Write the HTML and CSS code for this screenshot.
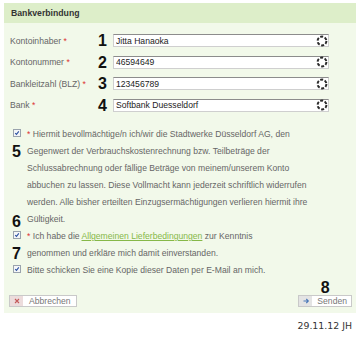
FILE: index.html
```html
<!DOCTYPE html>
<html lang="de">
<head>
    <meta charset="UTF-8">
    <meta name="viewport" content="width=device-width, initial-scale=1.0">
    <title>Bankverbindung</title>
    <link rel="stylesheet" href="styles.css">
</head>
<body>

<div class="panel">
    <div class="panel-head">Bankverbindung</div>

    <div class="panel-body">
        <form class="fields">
            <label class="field-label" for="inhaber">Kontoinhaber <span class="req">*</span></label>
            <span class="marker">1</span>
            <div class="input-wrap">
                <input type="text" id="inhaber" value="Jitta Hanaoka">
                <svg class="spin" viewBox="0 0 12 12"><circle cx="6" cy="6" r="4.4"/></svg>
            </div>

            <label class="field-label" for="konto">Kontonummer <span class="req">*</span></label>
            <span class="marker">2</span>
            <div class="input-wrap">
                <input type="text" id="konto" value="46594649">
                <svg class="spin" viewBox="0 0 12 12"><circle cx="6" cy="6" r="4.4"/></svg>
            </div>

            <label class="field-label" for="blz">Bankleitzahl (BLZ) <span class="req">*</span></label>
            <span class="marker">3</span>
            <div class="input-wrap">
                <input type="text" id="blz" value="123456789">
                <svg class="spin" viewBox="0 0 12 12"><circle cx="6" cy="6" r="4.4"/></svg>
            </div>

            <label class="field-label" for="bank">Bank <span class="req">*</span></label>
            <span class="marker">4</span>
            <div class="input-wrap">
                <input type="text" id="bank" value="Softbank Duesseldorf">
                <svg class="spin" viewBox="0 0 12 12"><circle cx="6" cy="6" r="4.4"/></svg>
            </div>
        </form>

        <div class="checks">
            <div class="check-row">
                <div class="check-side">
                    <span class="box"><svg viewBox="0 0 8 8"><path d="M1.6 4.2 L3.3 5.9 L6.4 1.8"/></svg></span>
                    <span class="marker">5</span>
                    <span class="marker marker-end">6</span>
                </div>
                <p><span class="req">*</span> Hiermit bevollmächtige/n ich/wir die Stadtwerke Düsseldorf AG, den Gegenwert der Verbrauchskostenrechnung bzw. Teilbeträge der Schlussabrechnung oder fällige Beträge von meinem/unserem Konto abbuchen zu lassen. Diese Vollmacht kann jederzeit schriftlich widerrufen werden. Alle bisher erteilten Einzugsermächtigungen verlieren hiermit ihre Gültigkeit.</p>
            </div>

            <div class="check-row">
                <div class="check-side">
                    <span class="box"><svg viewBox="0 0 8 8"><path d="M1.6 4.2 L3.3 5.9 L6.4 1.8"/></svg></span>
                    <span class="marker">7</span>
                </div>
                <p><span class="req">*</span> Ich habe die <a href="#">Allgemeinen Lieferbedingungen</a> zur Kenntnis<br>genommen und erkläre mich damit einverstanden.</p>
            </div>

            <div class="check-row">
                <div class="check-side">
                    <span class="box"><svg viewBox="0 0 8 8"><path d="M1.6 4.2 L3.3 5.9 L6.4 1.8"/></svg></span>
                </div>
                <p>Bitte schicken Sie eine Kopie dieser Daten per E-Mail an mich.</p>
            </div>
        </div>

        <div class="actions">
            <button type="button" class="btn">
                <span class="btn-icon btn-icon-cancel">
                    <svg viewBox="0 0 8 8"><path d="M2 2 L6 6 M6 2 L2 6"/></svg>
                </span>
                <span class="btn-text">Abbrechen</span>
            </button>
            <div class="send-group">
                <span class="marker">8</span>
                <button type="button" class="btn">
                    <span class="btn-icon btn-icon-send">
                        <svg viewBox="0 0 8 8"><path d="M1.5 4 H6.3 M4.3 2 L6.3 4 L4.3 6"/></svg>
                    </span>
                    <span class="btn-text">Senden</span>
                </button>
            </div>
        </div>
    </div>
</div>

<div class="stamp">29.11.12 JH</div>

</body>
</html>
```

FILE: styles.css
```css
* {
    margin: 0;
    padding: 0;
    box-sizing: border-box;
}

body {
    font-family: 'Liberation Sans', Arial, sans-serif;
    font-size: 8.6px;
    color: #666;
    background-color: #fff;
    padding: 3px 4px 0 4px;
    width: 360px;
}

/* Panel */
.panel {
    background-color: #f2f9ea;
}

.panel-head {
    background-color: #ddeec9;
    height: 20px;
    line-height: 20px;
    padding-left: 7px;
    font-weight: bold;
    font-size: 8.7px;
    color: #333;
}

.panel-body {
    padding: 11px 4px 6px 5px;
}

/* Form fields */
.fields {
    display: grid;
    grid-template-columns: 84px 19px 216px;
    grid-auto-rows: 13px;
    row-gap: 8.5px;
    align-items: center;
    padding-left: 1px;
}

.field-label {
    color: #666;
    white-space: nowrap;
}

.req {
    color: #d33;
}

.marker {
    font-size: 16px;
    font-weight: bold;
    color: #111;
    line-height: 13px;
}

.fields .marker {
    text-align: right;
    padding-right: 6px;
}

.input-wrap {
    position: relative;
    height: 13px;
}

.input-wrap input {
    width: 100%;
    height: 13px;
    border: 1px solid #cfcfcf;
    border-top-color: #8c8c8c;
    background-color: #fff;
    font-family: 'Liberation Sans', Arial, sans-serif;
    font-size: 8.6px;
    color: #222;
    padding: 0 2px;
    outline: none;
}

.spin {
    position: absolute;
    right: 1px;
    top: 0.5px;
    width: 12px;
    height: 12px;
    fill: none;
    stroke: #2b2b2b;
    stroke-width: 2;
    stroke-dasharray: 3 1.6;
}

/* Checkbox texts */
.checks {
    margin-top: 14px;
    line-height: 17.1px;
}

.check-row {
    display: flex;
}

.check-side {
    width: 18px;
    flex-shrink: 0;
    display: flex;
    flex-direction: column;
    padding-left: 3px;
}

.check-side .marker {
    line-height: 17.1px;
    height: 17.1px;
}

.check-side .marker-end {
    margin-top: auto;
    position: relative;
    top: 2px;
}

.box {
    display: block;
    width: 8px;
    height: 8px;
    margin: 3px 0 6.1px 1px;
    border: 1px solid #9aa3ad;
    background-color: #f4f6f8;
}

.box svg {
    display: block;
    width: 6px;
    height: 6px;
    fill: none;
    stroke: #2a4fa0;
    stroke-width: 1.4;
}

.check-row p {
    width: 284px;
    color: #666;
}

.check-row a {
    color: #86b848;
}

/* Buttons */
.actions {
    display: flex;
    justify-content: space-between;
    align-items: flex-end;
    margin-top: 2px;
}

.send-group {
    display: flex;
    flex-direction: column;
    align-items: center;
}

.send-group .marker {
    line-height: 14px;
}

.btn {
    display: flex;
    align-items: stretch;
    height: 12px;
    border: 1px solid #c9c9c9;
    background-color: #fff;
    font-family: 'Liberation Sans', Arial, sans-serif;
    font-size: 8.6px;
    color: #777;
    cursor: pointer;
}

.btn-icon {
    width: 13px;
    display: flex;
    align-items: center;
    justify-content: center;
}

.btn-icon svg {
    width: 8px;
    height: 8px;
    fill: none;
    stroke-width: 1.1;
}

.btn-icon-cancel {
    background-color: #ecdcdc;
}

.btn-icon-cancel svg {
    stroke: #c45a5a;
}

.btn-icon-send {
    background-color: #e4e4e4;
}

.btn-icon-send svg {
    stroke: #4a78b8;
}

.btn-text {
    padding: 0 5px 0 6px;
    line-height: 10px;
}

.send-group .btn-text {
    padding: 0 4px 0 5px;
}

.stamp {
    text-align: right;
    font-family: 'DejaVu Sans', Verdana, sans-serif;
    font-size: 9.4px;
    color: #333;
    padding: 7px 4px 0 0;
}
```
